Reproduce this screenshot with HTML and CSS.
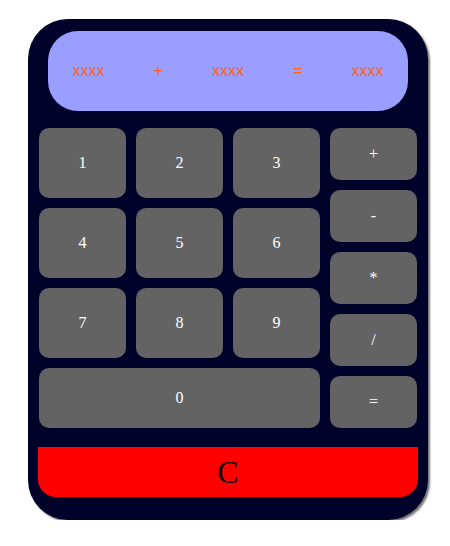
FILE: index.html
```
<!DOCTYPE html>
<html>
<head>
<meta charset="utf-8">
<link rel="stylesheet" href="styles.css">
</head>
<body>
<div class="calc">
  <div class="screen">
    <span>xxxx</span><span>+</span><span>xxxx</span><span>=</span><span>xxxx</span>
  </div>
  <div class="keys">
    <div class="digits">
      <button class="key">1</button>
      <button class="key">2</button>
      <button class="key">3</button>
      <button class="key">4</button>
      <button class="key">5</button>
      <button class="key">6</button>
      <button class="key">7</button>
      <button class="key">8</button>
      <button class="key">9</button>
      <button class="key zero">0</button>
    </div>
    <div class="ops">
      <button class="key">+</button>
      <button class="key">-</button>
      <button class="key">*</button>
      <button class="key">/</button>
      <button class="key">=</button>
    </div>
  </div>
  <button class="clear">C</button>
</div>
</body>
</html>
```
FILE: styles.css
```
html, body { margin: 0; padding: 0; background: #fff; }
body { padding: 19px 0 0 28px; }
.calc {
  width: 400px;
  height: 501px;
  box-sizing: border-box;
  background: #000229;
  border-radius: 40px;
  box-shadow: 2px 2px 2px #777;
  padding: 12px 10px 0 10px;
  display: flex;
  flex-direction: column;
}
.screen {
  margin: 0 10px;
  height: 80px;
  background: #9a9eff;
  border-radius: 30px;
  display: flex;
  justify-content: space-around;
  align-items: center;
  font-family: "Liberation Sans", Arial, sans-serif;
  font-size: 16px;
  color: #ff6011;
}
.keys {
  margin: 17px 0 0 1px;
  display: flex;
  gap: 10px;
}
.digits {
  display: grid;
  grid-template-columns: 87px 87px 87px;
  grid-template-rows: 70px 70px 70px 60px;
  gap: 10px;
}
.ops {
  display: grid;
  grid-template-columns: 87px;
  grid-template-rows: repeat(5, 52px);
  gap: 10px;
}
.key {
  border: none;
  margin: 0;
  padding: 0;
  background: #636363;
  color: #fff;
  border-radius: 10px;
  font-family: "Liberation Serif", "Times New Roman", serif;
  font-size: 16px;
}
.zero { grid-column: 1 / 4; }
.clear {
  margin-top: 19px;
  height: 50px;
  border: none;
  padding: 0;
  background: #ff0000;
  color: #000;
  border-radius: 0 0 18px 18px;
  font-family: "Liberation Serif", "Times New Roman", serif;
  font-size: 32px;
}
```
